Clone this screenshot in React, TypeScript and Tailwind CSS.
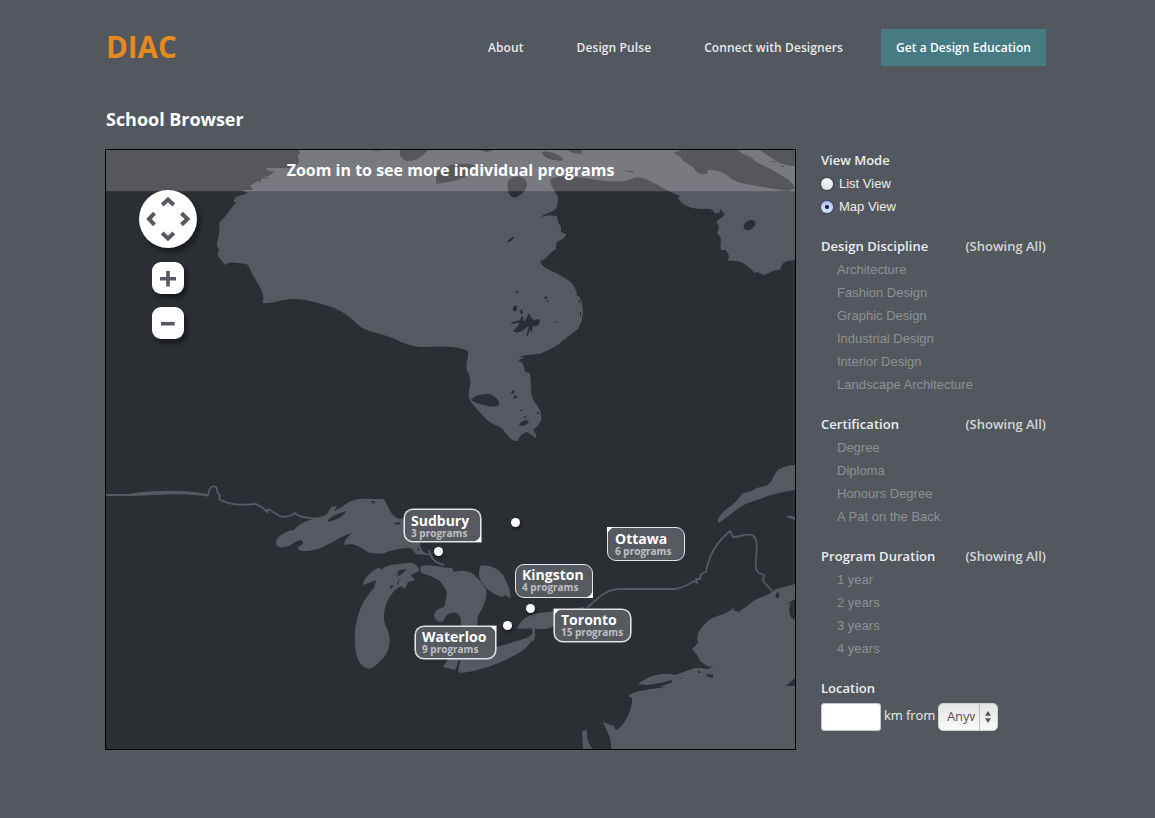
import React from "react";

const open = "font-['Open_Sans','Noto_Sans',sans-serif]";

function MapArt() {
  return (
    <svg className="block h-[599px] w-[689px]" viewBox="106 150 689 599">
      <rect x="106" y="150" width="689" height="599" fill="#2b2e33" />
      <g fill="#575961">
        <path d="M299 150L300 153L298 155L299 162L296 166L289 168L265 168L269 171L275 172L268 176L262 177L270 178L261 179L261 183L258 181L250 186L253 190L242 190L248 193L236 197L233 201L236 203C232 206 225 218 219 223C221 230 217 240 217 246L219 250C215 256 221 259 225 265C229 261 237 263 245 264C250 264 249 270 254 277C261 289 266 296 262 303C275 304 282 299 293 299C307 299 323 304 334 308C349 314 355 323 362 328C372 333 389 335 401 342C411 346 416 347 424 347C443 346 456 346 468 351C469 359 465 362 467 371C470 375 471 381 470 386C467 397 469 401 477 409C487 421 490 423 500 427C507 433 509 441 518 441C519 437 522 433 527 432L530 434L536 438L536 434L533 430C540 424 542 421 541 415C541 410 537 407 537 405L535 403C532 398 531 394 531 385L530 373L525 372L524 367C523 363 520 361 518 361L524 357L518 357L527 355L539 354C550 350 560 344 561 342L578 329C584 320 583 309 582 303L579 296L577 296C576 282 566 279 556 273C544 268 539 264 541 260C544 262 549 253 556 249L556 244L558 241C563 240 566 236 566 234L561 232L561 227L558 222L557 216C550 215 544 216 541 217C544 213 556 212 557 207C558 203 558 199 558 197C554 189 548 182 551 179C560 174 573 177 584 178C604 181 623 184 634 178C647 175 657 187 680 196L678 198C683 207 694 209 703 209C712 208 713 210 714 213L719 213L721 209L723 213L725 214C721 220 716 219 717 223L719 227L717 233C724 240 719 242 721 250L726 250L729 256L728 261C744 259 749 268 755 273L758 272L763 275C769 274 774 269 780 270C782 262 785 261 795 260V150Z" />
        <path d="M276 543C276 537 285 531 294 530C303 519 318 519 327 514L331 507L337 506L334 511L342 507C356 495 365 500 384 499C390 509 391 519 403 519L420 542C420 552 425 554 432 554L430 555L416 554L411 548C399 548 389 551 382 554L370 553C362 550 357 542 345 545C342 542 349 536 352 533C340 535 324 551 306 551C297 551 295 547 302 545C305 542 302 538 295 542C290 547 276 551 276 543Z" />
        <path d="M363 583C366 576 374 568 380 568L381 570C389 563 397 565 408 563C414 562 419 566 419 571L411 575L415 580L408 582L405 589L401 586L395 590C385 600 382 616 385 624C392 637 391 649 384 657C377 664 373 670 366 668C354 662 355 645 355 631C357 612 363 600 374 588L376 580L364 585Z" />
        <path d="M420 568C424 562 438 568 452 568L454 572C470 568 475 574 486 589C488 597 483 608 478 616L477 628L460 628C463 619 459 610 451 613C446 614 445 618 443 621C437 624 432 616 435 613C438 606 443 610 445 605C446 596 449 592 444 587C440 578 428 575 421 573Z" />
        <path d="M480 566C488 563 499 569 504 576C506 583 512 590 510 598L505 595L502 597C491 594 478 583 479 573Z" />
        <path d="M517 629C523 614 536 613 548 612L584 607C582 617 570 621 554 626C545 632 533 627 517 629Z" />
        <path d="M444 660L471 652C487 650 509 644 529 637C533 634 534 631 531 629L535 629C535 638 529 646 522 651C504 662 481 671 460 673L457 670L461 659L455 670L443 667L448 659Z" />
        <path d="M718 520C721 510 732 507 738 499L743 493C754 492 754 487 766 486C773 482 773 474 778 470C784 466 790 465 795 465V490C778 492 762 498 751 502C737 506 730 517 718 523ZM786 517C791 514 795 517 795 517V520C792 519 789 518 786 517Z" />
        <path d="M795 584L776 589L769 594C762 598 756 598 751 603L744 608L739 612L733 610L735 607L729 611C720 617 711 616 706 623C698 630 696 637 698 643L692 649L697 655L700 661L710 668L695 668L675 675C664 671 645 677 638 684L665 687C650 690 639 688 628 696L632 698C633 709 624 727 616 730L614 726L603 722C607 733 612 737 611 749H795Z" />
        <path d="M582 731L587 730C586 740 589 744 593 749H583Z" />
      </g>
      <g fill="none" stroke="#575961" strokeWidth="1.8" strokeLinejoin="round">
        <path d="M106 495H130C162 495 189 489 208 496C209 488 211 485 216 487C219 490 215 493 220 495L219 499C230 506 244 505 256 504L263 508L267 512L268 509C277 513 278 519 290 516L295 513C301 519 312 518 329 519" />
        <path d="M130 494.5C155 490 188 491 207 495L180 493Z" fill="#575961" />
        <path d="M429 550C431 559 435 563 444 565" />
        <path d="M587 608C599 597 606 589 621 589H675C683 588 688 584 691 583L694 581L697 583L696 579L700 579L701 574L706 572C708 560 714 544 730 531L733 537C742 537 753 530 756 540C759 552 752 570 759 573L764 575L763 581L773 592" />
        <path d="M533 630C535 633 535 638 532 641" />
      </g>
      <g fill="#2b2e33">
        <path d="M673 153L682 150H738C749 160 765 165 784 177C793 182 794 186 795 188L788 191C772 188 741 185 731 179C724 171 716 170 708 170L707 174C701 175 697 174 693 167L683 161C681 157 678 155 673 153Z" />
        <path d="M760 150H795V166C786 166 779 163 773 159ZM743 153L751 157L755 161L749 158ZM770 161L776 163L774 161ZM781 165L785 167L781 167Z" />
        <path d="M400 150H428C421 157 417 161 407 161C400 159 399 154 400 150ZM371 150H382L376 151ZM479 150H495L487 152ZM567 150H582V154L573 153Z" />
        <path d="M436 184C437 179 433 175 441 169C451 163 466 163 474 165C474 174 461 180 449 182ZM542 153C543 149 562 154 563 160C561 162 544 160 542 153ZM620 170L632 171L634 173Z" />
        <path d="M508 190C505 180 512 175 521 177C530 180 529 190 517 197C513 199 508 195 508 190ZM506 243C510 238 513 236 514 237C513 241 509 242 506 243Z" />
        <ellipse cx="749.5" cy="225" rx="6.5" ry="4.5" transform="rotate(-35 749.5 225)" />
        <path d="M510.5 323.5C514 321 518 321 520 320L521.5 316L523 317L524 322L526.5 318L528.5 313L531 317L534 321L536 319L539.5 319.5V324L536 326.5L533 326L531.500 333L530 330L527.500 336.500L526.500 335L529 326C525 328 521 333 516 332.500L513 331L518 326L519.500 322.500C516 323.500 513 324 510.500 323.500Z" />
        <ellipse cx="515.2" cy="308.5" rx="2" ry="3" transform="rotate(20 515 308)" />
        <ellipse cx="521.5" cy="312" rx="1.3" ry="2.4" />
        <path d="M543 298L547 296V299ZM545 301H548ZM516 291H518V293H516ZM554 322L557 321L555 323ZM578 301L580 300V304ZM580 312H581V316H580ZM546 300L548 300V302Z" />
        <path d="M471 400C474 396 479 394 488 394C496 395 500 402 499 405C493 409 479 404 472 401ZM511 392L514 390L515 392L512 394ZM515 395L518 398L513 398ZM519 425C521 420 528 419 529 422C526 426 521 427 519 425ZM520 410H522V411H520ZM523 417L526 416V418ZM537 412H539V414H537Z" />
        <path d="M328 520C334 514 341 513 346 511C344 517 336 520 328 522ZM371 501L375 501L373 504ZM394 523L401 522L399 525L395 524ZM417 547L420 550L418 551ZM399 570L407 569L402 574L397 577ZM390 586L394 585L391 589ZM397 584L400 577L398 585ZM392 576L400 571L398 573Z" />
        <path d="M420 571L424 575L419 576ZM458 661L460 660L458 672H456ZM776 594C777 591 780 593 779 597C777 600 774 597 776 594ZM795 599L785 605L791 603C788 610 789 618 795 620ZM706 674L713 675L713 678L708 677ZM698 670L701 673H698ZM681 678L682 679L680 679ZM795 678L786 686H795ZM700 668L714 666L708 669Z" />
        <path d="M637 687C648 684 658 684 664 682L672 680V682C665 686 650 689 635 692Z" />
      </g>
    </svg>
  );
}

type School = { name: string; count: number; corner: "tl" | "tr" | "br"; box: string; body: string };
const heavy = "shadow-[0_0_0_0.6px_#d9dadc]";
const schools: School[] = [
  { name: "Sudbury", count: 3, corner: "br", box: `left-[298px] top-[359px] h-[33px] w-[77px] rounded-br-none ${heavy}`, body: "pl-[6px] pt-[4px]" },
  { name: "Ottawa", count: 6, corner: "tl", box: "left-[501px] top-[377px] h-[34px] w-[78px] rounded-tl-none", body: "pl-[7px] pt-[4px]" },
  { name: "Kingston", count: 4, corner: "br", box: "left-[409px] top-[414px] h-[34px] w-[78px] rounded-br-none", body: "pl-[6px] pt-[3px]" },
  { name: "Toronto", count: 15, corner: "tl", box: `left-[448px] top-[459px] h-[33px] w-[77px] rounded-tl-none ${heavy}`, body: "pl-[6px] pt-[3px]" },
  { name: "Waterloo", count: 9, corner: "tr", box: `left-[309px] top-[476px] h-[33px] w-[81px] rounded-tr-none ${heavy}`, body: "pl-[6px] pt-[3px]" },
];
const corners = {
  tl: "-top-px -left-px",
  tr: "-top-px -right-px rotate-90",
  br: "-bottom-px -right-px rotate-180",
};

function Label({ s }: { s: School }) {
  return (
    <div className={`absolute rounded-[9px] border border-[#e4e5e7] bg-[#575961] ${s.box} ${open}`}>
      <svg className={`absolute size-[8px] ${corners[s.corner]}`} viewBox="0 0 8 8">
        <path d="M0 0H8C4 1 1 4 0 8Z" fill="#fff" />
      </svg>
      <div className={s.body}>
        <div className="whitespace-nowrap text-[14px] font-bold leading-[14px] text-white">{s.name}</div>
        <div className="whitespace-nowrap text-[10px] font-bold leading-[10px] text-[#bfc0c4]">{s.count} programs</div>
      </div>
    </div>
  );
}

const pins = ["left-[405px] top-[368px]", "left-[328px] top-[397px]", "left-[420px] top-[454px]", "left-[397px] top-[471px]"];

function Controls() {
  return (
    <>
      <div className="absolute left-[33px] top-[40px] size-[58px] rounded-full bg-white shadow-[3px_4px_5px_rgba(0,0,0,0.45)]">
        <svg viewBox="0 0 58 58" fill="none" stroke="#575961" strokeWidth="4">
          <path d="M23.200 15L29 9.500L34.800 15M23.200 43L29 48.500L34.800 43M15.500 23.200L10 29L15.500 34.800M42.500 23.200L48.500 29L42.500 34.800" />
        </svg>
      </div>
      <div className="absolute left-[46px] top-[112px] size-8 rounded-[9px] bg-white shadow-[3px_4px_5px_rgba(0,0,0,0.45)]">
        <svg viewBox="0 0 32 32" stroke="#575961" strokeWidth="3.6"><path d="M8 16.700H24M16 9V24.500" /></svg>
      </div>
      <div className="absolute left-[46px] top-[157px] size-8 rounded-[9px] bg-white shadow-[3px_4px_5px_rgba(0,0,0,0.45)]">
        <svg viewBox="0 0 32 32" stroke="#575961" strokeWidth="3.6"><path d="M9 16.700H22.700" /></svg>
      </div>
    </>
  );
}

function Filter({ title, items }: { title: string; items: string[] }) {
  return (
    <section className="mb-[17px]">
      <div className={`flex h-[23px] items-center justify-between whitespace-nowrap text-[13px] font-semibold ${open}`}>
        <h2 className="tracking-[0.05px] text-[#eceded]">{title}</h2>
        <span className="text-[#d3d5d6]">(Showing All)</span>
      </div>
      <ul className="pl-4">
        {items.map((i) => (
          <li key={i} className="flex h-[23px] items-center text-[13px] text-[#8d9194]">{i}</li>
        ))}
      </ul>
    </section>
  );
}

export default function App() {
  return (
    <div className="h-[818px] w-[1155px] overflow-hidden bg-[#53585f] pl-[105px] pr-[109px] font-['Liberation_Sans',Arial,sans-serif]">
      <header className={`flex h-[66px] items-end justify-between ${open}`}>
        <div className="mb-[-1px] pl-px text-[29.5px] font-bold leading-[40px] text-[#e58a1f]">DIAC</div>
        <nav className="flex h-[37px] items-center whitespace-nowrap text-[12px] font-semibold tracking-[0.1px] text-[#e7e9ea]">
          <a className="mr-[53px]">About</a>
          <a className="mr-[53px]">Design Pulse</a>
          <a className="mr-[38px]">Connect with Designers</a>
          <a className="flex h-[37px] w-[165px] items-center justify-center bg-[#477b84] tracking-[0.06px] text-white">Get a Design Education</a>
        </nav>
      </header>
      <h1 className={`mt-[41px] pl-px text-[18px] font-bold leading-6 tracking-[-0.03px] text-white ${open}`}>School Browser</h1>
      <main className="mt-[18px] flex">
        <div className="relative h-[601px] w-[691px] shrink-0 overflow-hidden border border-black">
          <MapArt />
          <div className={`absolute inset-x-0 top-0 flex h-[42px] items-center justify-center border-b border-white/5 bg-white/20 bg-clip-padding pb-px text-[16px] font-bold text-white ${open}`}>
            Zoom in to see more individual programs
          </div>
          <Controls />
          {schools.map((s) => <Label key={s.name} s={s} />)}
          {pins.map((p) => (
            <div key={p} className={`absolute size-[9px] rounded-full bg-white shadow-[1px_2px_3px_rgba(0,0,0,0.5)] ${p}`} />
          ))}
        </div>
        <aside className="ml-[25px] w-[225px]">
          <section className="mb-[17px]">
            <h2 className={`flex h-[23px] items-center text-[13px] font-semibold text-[#eceded] ${open}`}>View Mode</h2>
            <div className="flex h-[23px] items-center text-[13px] text-[#eceded]">
              <span className="mr-[6px] size-3 rounded-full bg-gradient-to-b from-[#f8f8f8] to-[#e2e2e2] shadow-[0_0_1px_1px_#3d4046]" />List View
            </div>
            <div className="flex h-[23px] items-center text-[13px] text-[#eceded]">
              <span className="mr-[6px] flex size-3 items-center justify-center rounded-full bg-gradient-to-b from-[#b5c0f0] to-[#d5e6ff] shadow-[0_0_1px_1px_#45497c]">
                <span className="size-1 rounded-full bg-[#11162c]" />
              </span>Map View
            </div>
          </section>
          <Filter title="Design Discipline" items={["Architecture", "Fashion Design", "Graphic Design", "Industrial Design", "Interior Design", "Landscape Architecture"]} />
          <Filter title="Certification" items={["Degree", "Diploma", "Honours Degree", "A Pat on the Back"]} />
          <Filter title="Program Duration" items={["1 year", "2 years", "3 years", "4 years"]} />
          <section>
            <h2 className={`flex h-[23px] items-center text-[13px] font-semibold text-[#eceded] ${open}`}>Location</h2>
            <div className={`mt-[3px] flex h-7 items-center text-[13px] text-[#eceded] ${open}`}>
              <span className="h-7 w-[60px] rounded-[3px] border border-[#c5c7ca] bg-white" />
              <span className="-mt-[3px] ml-[3px] w-[54px] whitespace-nowrap tracking-[-0.1px]">km from</span>
              <span className="flex h-7 w-[60px] items-center rounded-[5px] border border-[#d0d0d2] bg-gradient-to-b from-[#e4e4e5] to-[#fafafa] text-[#55575b]">
                <span className="ml-2 w-[28px] overflow-hidden whitespace-nowrap tracking-[-0.1px]">Anyw</span>
                <span className="ml-[4px] flex h-full flex-1 items-center justify-center border-l border-[#bcbcbe] pr-px">
                  <svg className="h-[12px] w-[6px]" viewBox="0 0 6 12" fill="#55575b"><path d="M0 4.8L3 0L6 4.8ZM0 7.2H6L3 12Z" /></svg>
                </span>
              </span>
            </div>
          </section>
        </aside>
      </main>
    </div>
  );
}
